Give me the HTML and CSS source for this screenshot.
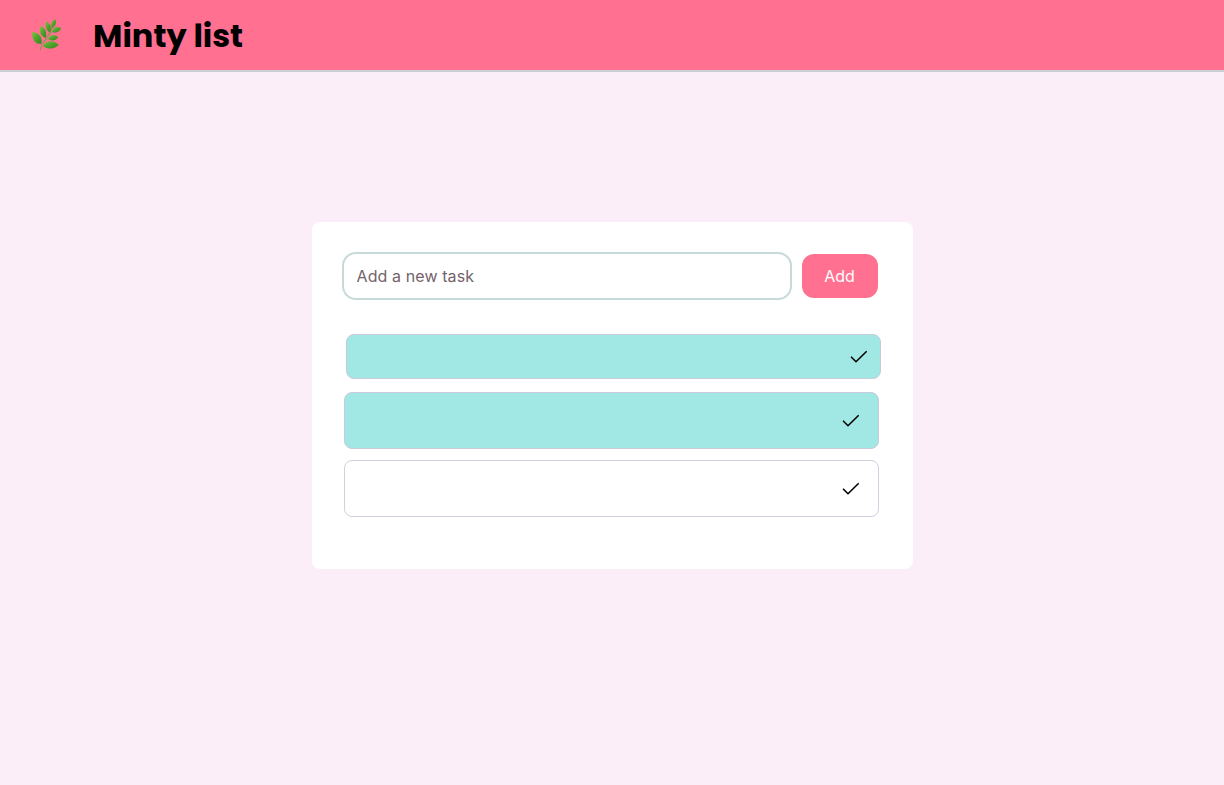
FILE: index.html
```html
<!DOCTYPE html>
<html lang="en">
<head>
    <meta charset="UTF-8">
    <meta name="viewport" content="width=device-width, initial-scale=1.0">
    <title>Minty list</title>
    <link rel="stylesheet" href="styles.css">
</head>
<body>
    <header>
        <svg class="logo" viewBox="30 30 96 96" aria-hidden="true">
            <defs>
                <linearGradient id="leaf" x1="0" y1="0" x2="1" y2="1">
                    <stop offset="0" stop-color="#7fc23f"/>
                    <stop offset="0.5" stop-color="#4fa32c"/>
                    <stop offset="1" stop-color="#36851f"/>
                </linearGradient>
            </defs>
            <path class="stem" d="M61 123 Q63 109 72 97 Q85 80 99 52"/>
            <path class="twig" d="M72 97 L88 87 L103 86 M82 84 L96 68 L108 63"/>
            <g fill="url(#leaf)">
                <path d="M36 69 C52 70 64 80 65 94 L64 105 C46 105 36 96 36 69Z"/>
                <path d="M68 111 C78 95 99 91 117 107 C101 122 83 122 68 111Z"/>
                <path d="M61 51 C75 56 82 67 77 87 C63 82 56 70 61 51Z"/>
                <path d="M79 37 C91 45 96 55 90 71 C79 65 73 53 79 37Z"/>
                <path d="M107 31 C110 43 106 54 95 58 C90 47 95 36 107 31Z"/>
                <path d="M96 69 C99 53 111 50 124 58 C117 70 108 74 96 69Z"/>
                <path d="M84 90 C91 75 104 75 115 85 C106 96 95 97 84 90Z"/>
            </g>
        </svg>
        <h1>Minty list</h1>
    </header>
    <main>
        <div class="card">
            <form class="add-form">
                <input type="text" class="task-input" placeholder="Add a new task">
                <button type="button" class="add-btn">Add</button>
            </form>
            <ul class="task-list">
                <li class="task done small">
                    <svg class="check" viewBox="0 0 18 14"><path d="M1.5 7.2 L6 11.7 L16.2 1.7"/></svg>
                </li>
                <li class="task done">
                    <svg class="check" viewBox="0 0 18 14"><path d="M1.5 7.2 L6 11.7 L16.2 1.7"/></svg>
                </li>
                <li class="task">
                    <svg class="check" viewBox="0 0 18 14"><path d="M1.5 7.2 L6 11.7 L16.2 1.7"/></svg>
                </li>
            </ul>
        </div>
    </main>
</body>
</html>
```
FILE: styles.css
```css
* {
    margin: 0;
    padding: 0;
    box-sizing: border-box;
}
body {
    font-family: Inter, sans-serif;
    background-color: #fceef8;
    min-height: 100vh;
}
header {
    height: 72px;
    padding-left: 30px;
    display: flex;
    align-items: center;
    background-color: #ff7091;
    border-bottom: 2px solid #c8d0d4;
}
.logo {
    width: 32px;
    height: 32px;
    margin-right: 31px;
}
.stem,
.twig {
    fill: none;
    stroke: #6fa044;
    stroke-width: 3;
    stroke-linecap: round;
}
.twig {
    stroke-width: 2;
}
h1 {
    padding-top: 2px;
    font-family: Poppins, Inter, sans-serif;
    font-size: 32px;
    font-weight: 700;
    line-height: 40px;
    color: #000;
}
main {
    display: flex;
    justify-content: center;
    padding-top: 150px;
}
.card {
    width: 601px;
    height: 347px;
    padding: 30px 34px 0 30px;
    background-color: #fff;
    border-radius: 8px;
}
.add-form {
    display: flex;
    align-items: center;
    gap: 10px;
}
.task-input {
    width: 450px;
    height: 48px;
    padding: 0 13px;
    font-family: inherit;
    font-size: 16px;
    letter-spacing: 0.1px;
    background-color: #fff;
    border: 2px solid #c8d9da;
    border-radius: 14px;
    outline: none;
}
.task-input::placeholder {
    color: #74636a;
    opacity: 1;
}
.add-btn {
    width: 76px;
    height: 44px;
    font-family: inherit;
    font-size: 16px;
    color: #fff;
    background-color: #ff7091;
    border: none;
    border-radius: 12px;
    cursor: pointer;
}

/* Tasks */
.task-list {
    list-style: none;
    margin-top: 34px;
    padding-left: 2px;
}
.task {
    width: 535px;
    height: 57px;
    margin-bottom: 11px;
    padding-right: 18px;
    display: flex;
    align-items: center;
    justify-content: flex-end;
    border: 1px solid #d0d0de;
    border-radius: 8px;
}
.task.done {
    background-color: #a1e8e4;
    border-color: #c8cbda;
}
.task.small {
    height: 45px;
    margin-left: 2px;
    margin-bottom: 13px;
    padding-right: 12px;
}
.check {
    width: 18px;
    height: 14px;
    fill: none;
    stroke: #000;
    stroke-width: 1.6;
    stroke-linecap: round;
    stroke-linejoin: round;
}
```
